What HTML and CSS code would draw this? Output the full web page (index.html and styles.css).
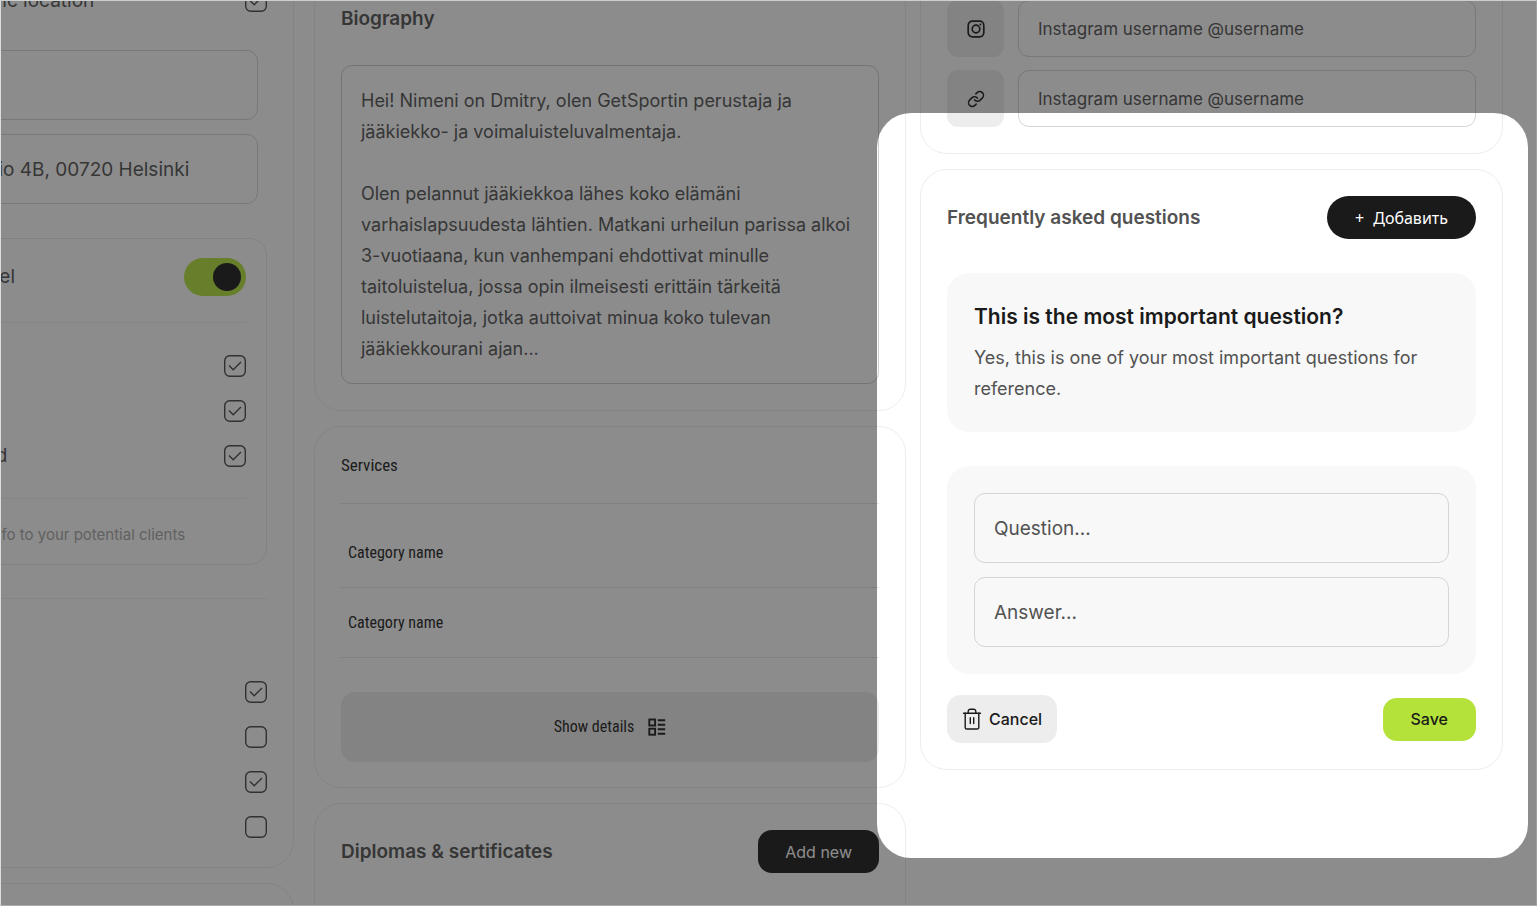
FILE: index.html
```html
<!DOCTYPE html>
<html lang="en">
<head>
    <meta charset="UTF-8">
    <meta name="viewport" content="width=device-width, initial-scale=1.0">
    <title>Trainer profile</title>
    <link rel="stylesheet" href="styles.css">
</head>
<body>
    <div class="page">
        <!-- Column 1: location and options -->
        <div class="column column-options">
            <section class="card options-card">
                <div class="option-row">
                    <label for="clinic">Clinic location</label>
                    <input type="checkbox" class="tick" id="clinic" checked>
                </div>
                <div class="address-fields">
                    <input type="text" class="field" aria-label="City">
                    <input type="text" class="field" aria-label="Address" value="kio 4B, 00720 Helsinki">
                </div>
                <div class="travel-box">
                    <div class="travel-head">
                        <label for="travel">vel</label>
                        <input type="checkbox" class="switch" id="travel" role="switch" checked>
                    </div>
                    <div class="option-list">
                        <div class="option-row">
                            <input type="checkbox" class="tick" aria-label="Option 1" checked>
                        </div>
                        <div class="option-row">
                            <input type="checkbox" class="tick" aria-label="Option 2" checked>
                        </div>
                        <div class="option-row">
                            <label for="travel-3">rd</label>
                            <input type="checkbox" class="tick" id="travel-3" checked>
                        </div>
                    </div>
                    <p class="hint">info to your potential clients</p>
                </div>
                <div class="option-list extra-list">
                    <div class="option-row"><input type="checkbox" class="tick" aria-label="Extra 1" checked></div>
                    <div class="option-row"><input type="checkbox" class="tick" aria-label="Extra 2"></div>
                    <div class="option-row"><input type="checkbox" class="tick" aria-label="Extra 3" checked></div>
                    <div class="option-row"><input type="checkbox" class="tick" aria-label="Extra 4"></div>
                </div>
            </section>
            <section class="card blank-card"></section>
        </div>

        <!-- Column 2: biography, services, diplomas -->
        <div class="column column-bio">
            <section class="card">
                <h2 class="card-title"><label for="bio">Biography</label></h2>
                <textarea class="bio" id="bio" rows="9">Hei! Nimeni on Dmitry, olen GetSportin perustaja ja
jääkiekko- ja voimaluisteluvalmentaja.

Olen pelannut jääkiekkoa lähes koko elämäni
varhaislapsuudesta lähtien. Matkani urheilun parissa alkoi
3-vuotiaana, kun vanhempani ehdottivat minulle
taitoluistelua, jossa opin ilmeisesti erittäin tärkeitä
luistelutaitoja, jotka auttoivat minua koko tulevan
jääkiekkourani ajan...</textarea>
            </section>

            <section class="card services">
                <h2 class="services-title">Services</h2>
                <ul class="category-list">
                    <li>Category name</li>
                    <li>Category name</li>
                </ul>
                <button type="button" class="details-button">
                    Show details
                    <svg width="18" height="18" viewBox="0 0 18 18" fill="none" stroke="currentColor" stroke-width="1.9">
                        <rect x="1.3" y="1.5" width="5.8" height="6"/>
                        <rect x="1.3" y="10.7" width="5.8" height="6"/>
                        <path d="M9.8 2.2h7.4M9.8 6.7h7.4M9.8 11.3h7.4M9.8 15.8h7.4"/>
                    </svg>
                </button>
            </section>

            <section class="card diplomas">
                <div class="card-head">
                    <h2 class="card-title">Diplomas &amp; sertificates</h2>
                    <button type="button" class="button button-dark">Add new</button>
                </div>
            </section>
        </div>

        <!-- Column 3: links and FAQ -->
        <div class="column column-links">
            <section class="card links">
                <div class="link-row">
                    <span class="link-icon">
                        <svg width="18" height="18" viewBox="0 0 18 18" fill="none" stroke="currentColor" stroke-width="1.7">
                            <rect x="1.2" y="1.2" width="15.6" height="15.6" rx="4.2"/>
                            <circle cx="9" cy="9" r="3.8"/>
                            <circle cx="13.4" cy="4.6" r="1" fill="currentColor" stroke="none"/>
                        </svg>
                    </span>
                    <input type="text" class="field" aria-label="Instagram" placeholder="Instagram username @username">
                </div>
                <div class="link-row">
                    <span class="link-icon">
                        <svg width="18" height="18" viewBox="0 0 24 24" fill="none" stroke="currentColor" stroke-width="2" stroke-linecap="round" stroke-linejoin="round">
                            <path d="M10 13a5 5 0 0 0 7.540.54l3-3a5 5 0 0 0-7.070-7.070l-1.720 1.710"/>
                            <path d="M14 11a5 5 0 0 0-7.540-.54l-3 3a5 5 0 0 0 7.070 7.070l1.710-1.710"/>
                        </svg>
                    </span>
                    <input type="text" class="field" aria-label="Link" placeholder="Instagram username @username">
                </div>
            </section>

            <section class="card faq">
                <div class="card-head">
                    <h2 class="card-title">Frequently asked questions</h2>
                    <button type="button" class="button button-pill"><span>+</span> Добавить</button>
                </div>
                <article class="panel faq-item">
                    <h3 class="question">This is the most important question?</h3>
                    <p class="answer">Yes, this is one of your most important questions for reference.</p>
                </article>
                <form class="faq-form">
                    <div class="panel faq-fields">
                        <input type="text" class="field" aria-label="Question" placeholder="Question...">
                        <input type="text" class="field" aria-label="Answer" placeholder="Answer...">
                    </div>
                    <div class="actions">
                        <button type="button" class="button button-cancel">
                            <svg width="20" height="22" viewBox="0 0 20 22" fill="none" stroke="currentColor" stroke-width="1.4" stroke-linecap="round" stroke-linejoin="round">
                                <path d="M1.500 5.200h17"/>
                                <path d="M3.200 5.200v14.200a1.600 1.600 0 0 0 1.600 1.600h10.400a1.600 1.600 0 0 0 1.600-1.600V5.200"/>
                                <path d="M6.200 5V3.400a2.200 2.200 0 0 1 2.200-2.200h3.200a2.200 2.200 0 0 1 2.200 2.200V5"/>
                                <path d="M8.300 9.800v5.800M11.700 9.800v5.800"/>
                            </svg>
                            Cancel
                        </button>
                        <button type="submit" class="button button-save">Save</button>
                    </div>
                </form>
            </section>
        </div>

        <div class="spotlight"></div>
    </div>
</body>
</html>
```

FILE: styles.css
```css
* {
    box-sizing: border-box;
}
body {
    margin: 0;
    background-color: #ffffff;
    color: #525252;
    font-family: Inter, "Liberation Sans", sans-serif;
    font-size: 19px;
    line-height: 24px;
}
h2, h3, p, ul {
    margin: 0;
    padding: 0;
}
input, textarea, button {
    font: inherit;
    color: inherit;
    margin: 0;
}
svg {
    flex: none;
    display: block;
}
.page {
    position: relative;
    display: flex;
    align-items: flex-start;
    height: 100vh;
    padding-right: 33px;
    overflow: hidden;
    border: 1px solid #dcdede;
    border-top-color: #ced0d0;
    border-bottom-color: #acacac;
    border-right-color: #a0a0a0;
}

/* Columns, scrolled past their first rows */
.column {
    display: flex;
    flex-direction: column;
    gap: 15px;
    min-width: 0;
}
.column-options {
    flex: none;
    width: 353px;
    margin: -38px 20px 0 -60px;
}
.column-bio {
    flex: 592 1 0;
    margin: -21px 14px 0 0;
}
.column-links {
    flex: 583 1 0;
    margin-top: -28px;
}
.card {
    padding: 26px;
    border: 1px solid #ededed;
    border-radius: 27px;
}
.card-head {
    display: flex;
    align-items: center;
    justify-content: space-between;
}
.card-title {
    font-size: 19px;
    font-weight: 600;
}

/* Form controls */
.field {
    display: block;
    width: 100%;
    height: 70px;
    padding: 0 19px;
    border: 1px solid #d6d6d6;
    border-radius: 11px;
    background: transparent;
}
.field::placeholder {
    color: #525252;
    opacity: 1;
}
.tick {
    appearance: none;
    flex: none;
    width: 22px;
    height: 22px;
    margin-left: auto;
    background: url("data:image/svg+xml,%3Csvg xmlns='http://www.w3.org/2000/svg' viewBox='0 0 22 22' fill='none' stroke='%23484848' stroke-width='1.4'%3E%3Crect x='.7' y='.7' width='20.6' height='20.6' rx='5'/%3E%3C/svg%3E");
}
.tick:checked {
    background-image: url("data:image/svg+xml,%3Csvg xmlns='http://www.w3.org/2000/svg' viewBox='0 0 22 22' fill='none' stroke='%23484848' stroke-width='1.4'%3E%3Crect x='.7' y='.7' width='20.6' height='20.6' rx='5'/%3E%3Cpath d='M5 10.500L9.200 14.700L17 7'/%3E%3C/svg%3E");
}
.switch {
    appearance: none;
    width: 62px;
    height: 38px;
    padding: 5px;
    border-radius: 19px;
    background-color: #d6d6d6;
}
.switch::before {
    content: "";
    display: block;
    width: 28px;
    height: 28px;
    border-radius: 50%;
    background-color: #1a1a1a;
}
.switch:checked {
    background-color: #b4e23a;
}
.switch:checked::before {
    margin-left: auto;
}
.button {
    height: 43px;
    padding: 0 28px;
    border: none;
    border-radius: 14px;
    font-size: 16px;
    font-weight: 500;
    white-space: nowrap;
    cursor: pointer;
}
.button-dark {
    padding: 0 27px;
    background-color: #1a1a1a;
    color: #ffffff;
    font-weight: 400;
}
.button-pill {
    display: flex;
    align-items: center;
    gap: 9px;
    border-radius: 22px;
    background-color: #1a1a1a;
    color: #ffffff;
    font-family: "Noto Sans", sans-serif;
    font-weight: 400;
}
.button-cancel {
    display: flex;
    align-items: center;
    gap: 7px;
    height: 48px;
    padding: 0 15px;
    background-color: #ededed;
    color: #1a1a1a;
}
.button-save {
    background-color: #b4e23a;
    color: #1a1a1a;
}

/* Options column */
.options-card {
    padding-bottom: 29px;
}
.option-row {
    display: flex;
    align-items: center;
    height: 22px;
}
.option-list {
    display: flex;
    flex-direction: column;
    gap: 23px;
}
.address-fields {
    display: flex;
    flex-direction: column;
    gap: 14px;
    margin: 38px 9px 34px 0;
}
.travel-box {
    padding: 19px 20px 17px;
    border: 1px solid #e8e8e8;
    border-radius: 17px;
}
.travel-head {
    display: flex;
    align-items: center;
    justify-content: space-between;
    padding-bottom: 26px;
    border-bottom: 1px solid #f0f0f0;
}
.travel-box .option-list {
    padding: 32px 0 31px;
    border-bottom: 1px solid #f0f0f0;
}
.hint {
    margin-top: 24px;
    color: #a8a8a8;
    font-size: 15px;
    white-space: nowrap;
}
.extra-list {
    margin-top: 33px;
    padding-top: 82px;
    border-top: 1px solid #f0f0f0;
}
.blank-card {
    height: 200px;
}

/* Biography column */
.bio {
    display: block;
    width: 100%;
    height: 319px;
    margin-top: 34px;
    padding: 19px;
    border: 1px solid #cecece;
    border-radius: 11px;
    background: transparent;
    font-size: 18px;
    line-height: 31px;
    resize: none;
    overflow: hidden;
}
.services {
    padding-bottom: 25px;
    color: #1a1a1a;
    font-family: "Roboto Condensed", "Liberation Sans Narrow", Roboto, sans-serif;
    font-size: 16px;
}
.services-title {
    height: 51px;
    border-bottom: 1px solid #e6e6e6;
    font-size: 17px;
    font-weight: 400;
}
.category-list {
    padding-top: 14px;
    list-style: none;
}
.category-list li {
    display: flex;
    align-items: center;
    height: 70px;
    padding: 0 7px;
    border-bottom: 1px solid #e6e6e6;
}
.details-button {
    display: flex;
    align-items: center;
    justify-content: center;
    gap: 14px;
    width: 100%;
    height: 70px;
    margin-top: 34px;
    border: none;
    border-radius: 14px;
    background-color: #ededed;
    cursor: pointer;
}
.diplomas {
    height: 240px;
}

/* Links column */
.links {
    display: flex;
    flex-direction: column;
    gap: 13px;
}
.link-row {
    display: flex;
    gap: 14px;
}
.link-icon {
    display: flex;
    flex: none;
    align-items: center;
    justify-content: center;
    width: 57px;
    height: 57px;
    border-radius: 11px;
    background-color: #ededed;
    color: #1a1a1a;
}
.link-row .field {
    height: 57px;
    font-size: 17px;
}
.panel {
    margin-top: 34px;
    padding: 27px;
    border-radius: 22px;
    background-color: #f8f8f8;
}
.faq-item {
    padding-bottom: 28px;
}
.question {
    margin-bottom: 8px;
    color: #1a1a1a;
    font-size: 21px;
    font-weight: 600;
    line-height: 34px;
}
.answer {
    font-size: 18px;
    line-height: 31px;
}
.faq-fields {
    display: flex;
    flex-direction: column;
    gap: 14px;
}
.actions {
    display: flex;
    align-items: center;
    justify-content: space-between;
    margin-top: 21px;
}

/* Dims the page around the highlighted area */
.spotlight {
    position: absolute;
    top: 112px;
    right: 8px;
    width: 651px;
    height: 745px;
    border-radius: 34px;
    box-shadow: 0 0 0 2000px rgba(26, 26, 26, 0.5);
    pointer-events: none;
}
```
